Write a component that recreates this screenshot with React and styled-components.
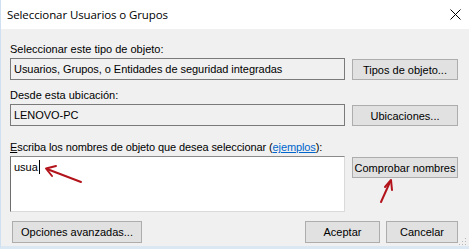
import React from "react";
import styled, { createGlobalStyle } from "styled-components";

const Global = createGlobalStyle`
  html, body { margin: 0; padding: 0; background: #ffffff; }
  #root { width: 469px; height: 249px; }
`;

const Window = styled.div`
  position: relative;
  width: 469px;
  height: 249px;
  box-sizing: border-box;
  display: flex;
  flex-direction: column;
  background: #f0f0f0;
  border-left: 1px solid #cfe0f0;
  border-bottom: 3px solid #dbe8f4;
  overflow: hidden;
  font-family: "Liberation Sans", Arial, sans-serif;
  font-size: 11px;
  color: #000;
`;

const TitleBar = styled.div`
  height: 29px;
  flex: none;
  background: #ffffff;
  display: flex;
  align-items: center;
  justify-content: space-between;
  padding: 0 8px 0 6px;
`;

const Title = styled.span`
  font-family: "Open Sans", "Noto Sans", sans-serif;
  font-size: 11.5px;
  color: #000;
  letter-spacing: -0.1px;
`;

const Body = styled.div`
  flex: 1;
  display: grid;
  grid-template-columns: 335px 106px;
  column-gap: 7px;
  padding: 14px 11px 0 9px;
  align-content: start;
`;

const Label = styled.div`
  grid-column: 1 / span 2;
  height: 13px;
  line-height: 13px;
  margin-bottom: ${(p) => p.$mb || 2}px;
  white-space: nowrap;
  letter-spacing: ${(p) => p.$ls || 0}px;
`;

const Field = styled.div`
  height: 22px;
  box-sizing: border-box;
  border: 1px solid #7a7a7a;
  background: #f0f0f0;
  padding: 0 3px;
  display: flex;
  align-items: center;
  white-space: nowrap;
  letter-spacing: -0.05px;
  margin-bottom: ${(p) => p.$mb || 0}px;
`;

const Button = styled.div`
  height: ${(p) => p.$h || 21}px;
  width: ${(p) => (p.$w ? p.$w + "px" : "auto")};
  box-sizing: border-box;
  border: 1px solid #adadad;
  background: #e1e1e1;
  display: flex;
  align-items: center;
  justify-content: center;
  white-space: nowrap;
  align-self: ${(p) => p.$align || "center"};
  margin-top: ${(p) => p.$mt || 0}px;
`;

const TextArea = styled.div`
  height: 56px;
  box-sizing: border-box;
  background: #ffffff;
  border-top: 1px solid #8a8a8a;
  border-left: 1px solid #6e6e6e;
  border-right: 1px solid #dadada;
  border-bottom: 1px solid #dadada;
  padding: 3px 3px;
  line-height: 13px;
`;

const Caret = styled.span`
  display: inline-block;
  width: 1px;
  height: 14px;
  background: #000;
  vertical-align: -3px;
  margin-left: 1px;
`;

const Link = styled.span`
  color: #0066cc;
  text-decoration: underline;
`;

const Underlined = styled.span`
  text-decoration: underline;
`;

const Footer = styled.div`
  grid-column: 1 / span 2;
  display: flex;
  align-items: center;
  gap: 6px;
  margin-top: 9px;
  padding-left: 2px;
`;

const Spacer = styled.div`
  flex: 1;
`;

const Overlay = styled.svg`
  position: absolute;
  left: 0;
  top: 0;
  pointer-events: none;
`;

const Grip = styled.svg`
  position: absolute;
  right: 2px;
  bottom: 0px;
`;

export default function App() {
  return (
    <>
      <Global />
      <Window>
        <TitleBar>
          <Title>Seleccionar Usuarios o Grupos</Title>
          <svg width="11" height="11" viewBox="0 0 11 11">
            <path d="M0.5 0.5 L10.5 10.5 M10.5 0.5 L0.5 10.5" stroke="#000" strokeWidth="1" />
          </svg>
        </TitleBar>
        <Body>
          <Label>Seleccionar este tipo de objeto:</Label>
          <Field $mb={9}>Usuarios, Grupos, o Entidades de seguridad integradas</Field>
          <Button $align="start" $mt={1}>Tipos de objeto...</Button>
          <Label>Desde esta ubicación:</Label>
          <Field $mb={15}>LENOVO-PC</Field>
          <Button $align="start" $mt={1}>Ubicaciones...</Button>
          <Label $ls={-0.1}>
            <Underlined>E</Underlined>scriba los nombres de objeto que desea seleccionar (<Link>ejemplos</Link>):
          </Label>
          <TextArea>
            usua
            <Caret />
          </TextArea>
          <Button $align="start" $mt={1}>Comprobar nombres</Button>
          <Footer>
            <Button $w={130} $h={22}>Opciones avanzadas...</Button>
            <Spacer />
            <Button $w={75} $h={22}>Aceptar</Button>
            <Button $w={72} $h={22}>Cancelar</Button>
          </Footer>
        </Body>
        <Overlay width="469" height="249" viewBox="0 0 469 249">
          <g stroke="#b3141b" strokeWidth="2" fill="none" strokeLinecap="round">
            <path d="M80 182 L46 169" />
            <path d="M45 168.5 L55 166 M45 168.5 L51 176" />
            <path d="M380 202 L389 182" />
            <path d="M390 180 L384 187 M390 180 L391 190" />
          </g>
        </Overlay>
        <Grip width="8" height="8" viewBox="0 0 8 8">
          <g fill="#b8b8b8">
            <rect x="6" y="0" width="1" height="1" />
            <rect x="3" y="3" width="1" height="1" />
            <rect x="6" y="3" width="1" height="1" />
            <rect x="0" y="6" width="1" height="1" />
            <rect x="3" y="6" width="1" height="1" />
            <rect x="6" y="6" width="1" height="1" />
          </g>
        </Grip>
      </Window>
    </>
  );
}
